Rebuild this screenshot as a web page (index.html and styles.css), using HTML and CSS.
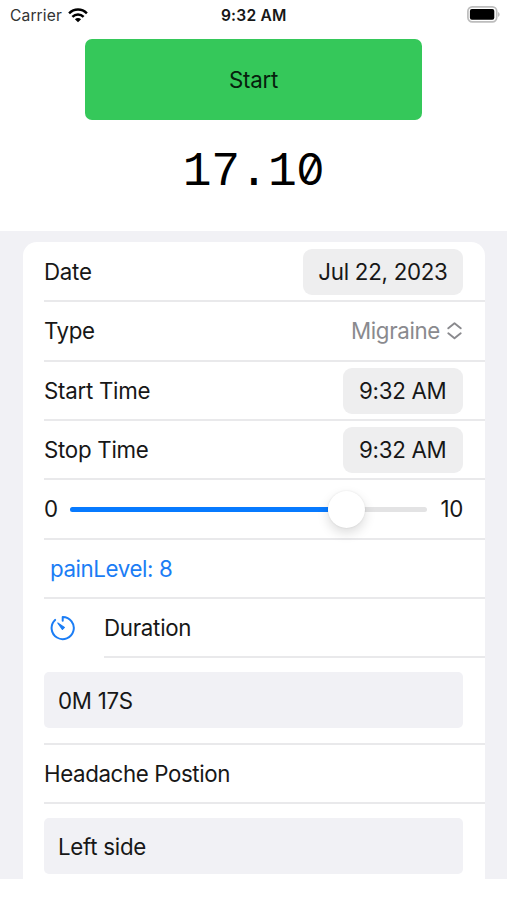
FILE: index.html
```html
<!DOCTYPE html>
<html lang="en">
<head>
<meta charset="utf-8">
<title>Headache Log</title>
<link rel="stylesheet" href="styles.css">
</head>
<body>
<header class="status">
  <div class="carrier"><span>Carrier</span>
    <svg class="wifi" width="20" height="15" viewBox="0 0 20 15" fill="none" stroke="#000" stroke-width="2.5"><path d="M1.1 5.3C6.2.3 13.8.3 18.9 5.3M4.4 8.8C7.5 5.8 12.5 5.8 15.6 8.8"/><path d="M10 14.2 6.9 11.2C8.6 9.6 11.4 9.6 13.1 11.2Z" fill="#000" stroke="none"/></svg>
  </div>
  <div class="clock">9:32 AM</div>
  <svg class="battery" width="33" height="17" viewBox="0 0 33 17"><rect x=".9" y=".9" width="28.8" height="15" rx="4.3" fill="none" stroke="#bdbdbd" stroke-width="1.7"/><rect x="2.9" y="3.1" width="24.4" height="10.6" rx="2" fill="#000"/><path d="M31.2 6v4.8c1.8-.7 1.8-4.1 0-4.8Z" fill="#b2b2b2"/></svg>
</header>
<section class="timer">
  <button class="start"><span>Start</span></button>
  <div class="elapsed">17.1<span class="zero">0</span></div>
</section>
<main class="form">
  <div class="card">
    <div class="row"><span>Date</span><span class="pill">Jul 22, 2023</span></div>
    <div class="row"><span class="tight">Type</span><span class="picker"><span>Migraine</span><svg width="15" height="18" viewBox="0 0 15 18" fill="none" stroke="#8a8a8e" stroke-width="1.9" stroke-linecap="round" stroke-linejoin="round"><path d="M1.3 6.3 7.5 1.3l6.2 5M1.3 11.3l6.2 5 6.2-5"/></svg></span></div>
    <div class="row"><span>Start Time</span><span class="pill time">9:32 AM</span></div>
    <div class="row"><span>Stop Time</span><span class="pill time">9:32 AM</span></div>
    <div class="row"><span>0</span><div class="slider"><div class="fill"></div><div class="knob"></div></div><span>10</span></div>
    <div class="row"><span class="pain">painLevel: 8</span></div>
    <div class="row duration"><svg width="26" height="26" viewBox="0 0 26 26" fill="none" stroke="#1b7df5" stroke-width="2" stroke-linecap="round" stroke-linejoin="round"><path d="M12.7 5.8V1.9A11.1 11.1 0 1 1 5.1 4.9"/><path d="M7.8 8 12.4 14.4 14.4 12.4Z" fill="#1b7df5" stroke-width="1.2"/></svg><div class="label"><span>Duration</span></div></div>
    <div class="row tall"><div class="field">0M 17S</div></div>
    <div class="row"><span class="tight">Headache Postion</span></div>
    <div class="row tall"><div class="field">Left side</div></div>
  </div>
</main>
</body>
</html>
```
FILE: styles.css
```css
* { box-sizing: border-box; }
body {
  margin: 0;
  height: 900px;
  overflow: hidden;
  background: #fff;
  color: #171717;
  font: 22.3px/28px Inter, "Liberation Sans", sans-serif;
  letter-spacing: -.27px;
}
.status {
  height: 39px;
  padding: 0 7.5px 9px 10px;
  display: grid;
  grid-template-columns: 1fr auto 1fr;
  align-items: center;
  font-size: 15.6px;
  line-height: 20px;
}
.carrier { display: flex; align-items: center; gap: 6px; color: #333; letter-spacing: .12px; }
.carrier span, .clock { padding-top: 1px; }
.clock { margin-right: 2px; font-weight: 600; letter-spacing: .2px; }
.wifi { display: block; }
.battery { justify-self: end; margin-top: -2px; }
.timer { height: 191.5px; display: flex; flex-direction: column; align-items: center; }
.start {
  width: 337px;
  height: 80.5px;
  padding: 1px 0 0;
  border: 0;
  border-radius: 7px;
  background: #35c85a;
  color: #06200d;
  font: inherit;
  letter-spacing: inherit;
}
.elapsed {
  margin-top: 23px;
  color: #000;
  font: 48px/52px "Liberation Mono", monospace;
  letter-spacing: -.4px;
}
.zero { font-size: 44px; font-family: Inter, sans-serif; font-feature-settings: "zero" 1; letter-spacing: 0; }
.form { height: 648px; padding: 11.5px 22px 0 22.5px; background: #f1f1f5; overflow: hidden; }
.card { height: 700px; padding: 1px 0 0 21.5px; background: #fff; border-radius: 14px 14px 0 0; }
.row {
  height: 59.33px;
  padding: 1px 22px 0 0;
  display: flex;
  align-items: center;
  justify-content: space-between;
  border-bottom: 2px solid #e9e9eb;
  white-space: nowrap;
}
.pill {
  width: 160px;
  height: 46px;
  border-radius: 9px;
  background: #eeeeef;
  line-height: 46px;
  text-align: center;
}
.time { width: 120.5px; letter-spacing: -.3px; }
.picker { display: flex; align-items: center; gap: 7px; margin-right: 1px; color: #8a8a8e; }
.picker span { letter-spacing: -.33px; }
.tight { letter-spacing: -.38px; }
.slider {
  flex: 1;
  margin: 0 13px 0 12px;
  height: 5px;
  display: flex;
  align-items: center;
  border-radius: 3px;
  background: #e3e3e4;
}
.fill { width: 258px; height: 5px; border-radius: 3px 0 0 3px; background: #077aff; }
.knob {
  flex: none;
  width: 37px;
  height: 37px;
  border-radius: 50%;
  background: #fff;
  box-shadow: 0 5px 12px rgba(0, 0, 0, .14), 0 0 2px rgba(0, 0, 0, .1);
}
.pain { margin-left: 6px; color: #1b7df5; letter-spacing: -.4px; }
.duration { padding: 0 0 0 6px; border: 0; }
.duration svg { margin-bottom: 2px; }
.label {
  width: 381px;
  height: 100%;
  padding-top: 1px;
  display: flex;
  align-items: center;
  border-bottom: 2px solid #e9e9eb;
}
.tall { height: 86.3px; padding-top: 0; }
.field {
  width: 100%;
  height: 56px;
  padding-left: 14px;
  border-radius: 5px;
  background: #f1f1f5;
  line-height: 57px;
}
```
